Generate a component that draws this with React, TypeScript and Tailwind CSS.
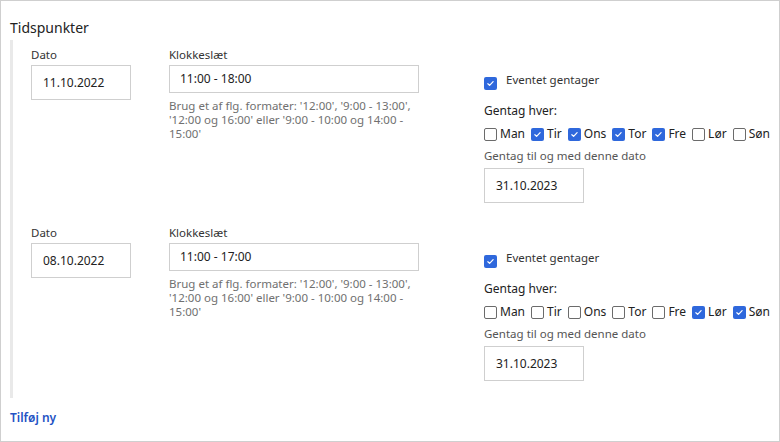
import React from "react";

const DAYS = ["Man", "Tir", "Ons", "Tor", "Fre", "Lør", "Søn"];

interface SlotProps {
  date: string;
  time: string;
  days: string[];
  until: string;
}

function Check({ checked }: { checked: boolean }) {
  if (checked) {
    return (
      <span className="flex h-[13px] w-[13px] shrink-0 items-center justify-center rounded-[2px] bg-[#2f68dc]">
        <svg viewBox="0 0 12 12" className="h-[9px] w-[9px]" fill="none">
          <path d="M2.5 6.3l2.3 2.2 4.7-5" stroke="white" strokeWidth="1.6" strokeLinecap="round" strokeLinejoin="round" />
        </svg>
      </span>
    );
  }
  return <span className="h-[13px] w-[13px] shrink-0 rounded-[2px] border border-[#6b6b6b] bg-white" />;
}

function Slot({ date, time, days, until }: SlotProps) {
  return (
    <div className="flex h-[178px] pl-[18px] pt-[7px]">
      {/* Dato */}
      <div className="w-[138px] shrink-0">
        <div className="text-[11.5px] leading-[16px] text-[#333]">Dato</div>
        <div className="mt-[2px] flex h-[35px] w-[100px] items-center border border-[#cfcfcf] pl-[11px] text-[12px] text-[#222]">
          {date}
        </div>
      </div>

      {/* Klokkeslæt */}
      <div className="w-[250px] shrink-0">
        <div className="text-[11.5px] leading-[16px] text-[#333]">Klokkeslæt</div>
        <div className="mt-[2px] flex h-[28px] w-[250px] items-center border border-[#cfcfcf] pl-[10px] text-[12px] text-[#222]">
          {time}
        </div>
        <p className="mt-[6px] whitespace-nowrap text-[11.5px] leading-[14px] text-[#707070]">
          Brug et af flg. formater: '12:00', '9:00 - 13:00',
          <br />
          '12:00 og 16:00' eller '9:00 - 10:00 og 14:00 -
          <br />
          15:00'
        </p>
      </div>

      {/* Gentagelse */}
      <div className="ml-[65px] shrink-0 pt-[25px]">
        <div className="flex items-start gap-[9px]">
          <span className="mt-[5px]">
            <Check checked />
          </span>
          <span className="text-[11.5px] leading-[16px] text-[#333]">Eventet gentager</span>
        </div>
        <div className="mt-[13px] text-[12px] leading-[16px] text-[#222]">Gentag hver:</div>
        <div className="mt-[7px] flex items-center gap-[6px]">
          {DAYS.map((d) => (
            <label key={d} className="flex items-center gap-[3px] text-[12px] leading-[16px] text-[#222]">
              <Check checked={days.includes(d)} />
              {d}
            </label>
          ))}
        </div>
        <div className="mt-[6px] text-[11.5px] leading-[16px] text-[#555]">Gentag til og med denne dato</div>
        <div className="mt-[4px] flex h-[35px] w-[100px] items-center border border-[#cfcfcf] pl-[11px] text-[12px] text-[#222]">
          {until}
        </div>
      </div>
    </div>
  );
}

export default function App() {
  return (
    <div
      className="h-[442px] w-[780px] overflow-hidden border border-[#cfcfcf] bg-white pl-[9px] pt-[17px]"
      style={{ fontFamily: '"Noto Sans", "Open Sans", sans-serif' }}
    >
      <h2 className="text-[14px] leading-[20px] text-[#222]">Tidspunkter</h2>
      <div className="mt-[2px] h-[358px] border-l-[3px] border-[#e9e9e9]">
        <Slot date="11.10.2022" time="11:00 - 18:00" days={["Tir", "Ons", "Tor", "Fre"]} until="31.10.2023" />
        <Slot date="08.10.2022" time="11:00 - 17:00" days={["Lør", "Søn"]} until="31.10.2023" />
      </div>
      <a className="mt-[12px] block text-[12px] font-semibold leading-[16px] text-[#2352c4]" href="#">
        Tilføj ny
      </a>
    </div>
  );
}
